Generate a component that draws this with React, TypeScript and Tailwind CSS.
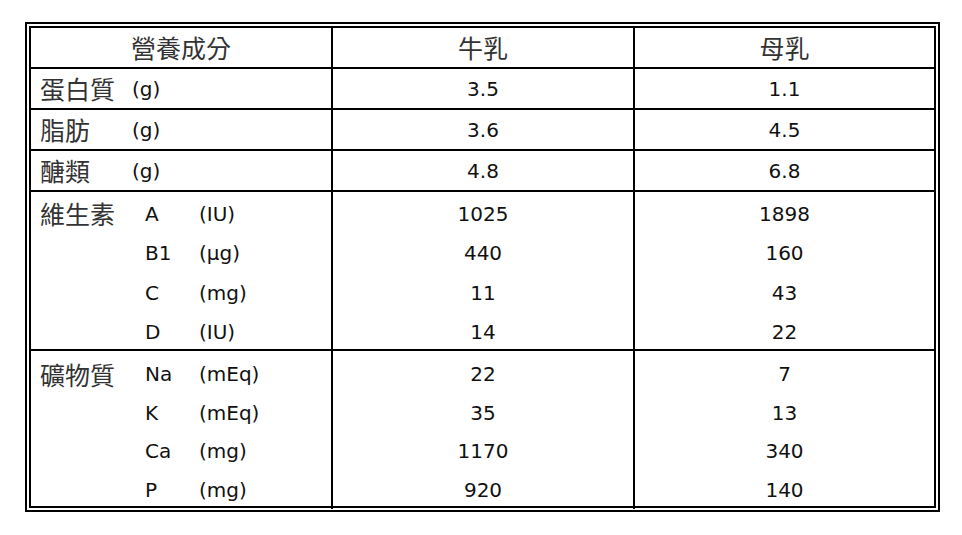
import React from 'react';

type Line = { letter: string; unit: string; cow: string; human: string };

const simpleRows = [
  { label: '蛋白質', cow: '3.5', human: '1.1' },
  { label: '脂肪', cow: '3.6', human: '4.5' },
  { label: '醣類', cow: '4.8', human: '6.8' },
];

const vitamins: Line[] = [
  { letter: 'A', unit: '(IU)', cow: '1025', human: '1898' },
  { letter: 'B1', unit: '(μg)', cow: '440', human: '160' },
  { letter: 'C', unit: '(mg)', cow: '11', human: '43' },
  { letter: 'D', unit: '(IU)', cow: '14', human: '22' },
];

const minerals: Line[] = [
  { letter: 'Na', unit: '(mEq)', cow: '22', human: '7' },
  { letter: 'K', unit: '(mEq)', cow: '35', human: '13' },
  { letter: 'Ca', unit: '(mg)', cow: '1170', human: '340' },
  { letter: 'P', unit: '(mg)', cow: '920', human: '140' },
];

const cjk = "text-[25px] leading-none text-[#333] font-['Noto_Sans_CJK_TC',sans-serif]";
const latin = "text-[20px] leading-none text-[#111] font-['DejaVu_Sans',sans-serif]";

const GroupRow: React.FC<{ label: string; lines: Line[]; lineH: string; pad: string; rowH: string; last?: boolean }> = ({
  label,
  lines,
  lineH,
  pad,
  rowH,
  last,
}) => (
  <div className={`grid grid-cols-[302px_302px_299px] ${rowH} ${last ? '' : 'border-b-2 border-black'}`}>
    <div className={`border-r-2 border-black flex flex-col pl-[9px] ${pad}`}>
      {lines.map((l, i) => (
        <div key={l.letter} className={`flex items-center ${lineH}`}>
          <span className={`w-[105px] ${cjk}`}>{i === 0 ? label : ''}</span>
          <span className={`w-[54px] ${latin}`}>{l.letter}</span>
          <span className={latin}>{l.unit}</span>
        </div>
      ))}
    </div>
    <div className={`border-r-2 border-black flex flex-col ${pad}`}>
      {lines.map((l) => (
        <div key={l.letter} className={`flex items-center justify-center ${lineH} ${latin}`}>
          {l.cow}
        </div>
      ))}
    </div>
    <div className={`flex flex-col ${pad}`}>
      {lines.map((l) => (
        <div key={l.letter} className={`flex items-center justify-center ${lineH} ${latin}`}>
          {l.human}
        </div>
      ))}
    </div>
  </div>
);

const App: React.FC = () => {
  return (
    <div className="min-h-screen bg-white pt-[22px] pl-[25px]">
      {/* double outer frame */}
      <div className="w-[915px] border-2 border-black p-[2px]">
        <div className="border-2 border-black">
          {/* Header */}
          <div className="grid grid-cols-[302px_302px_299px] h-[41px] border-b-2 border-black">
            <div className={`border-r-2 border-black flex items-center justify-center ${cjk}`}>營養成分</div>
            <div className={`border-r-2 border-black flex items-center justify-center ${cjk}`}>牛乳</div>
            <div className={`flex items-center justify-center ${cjk}`}>母乳</div>
          </div>

          {simpleRows.map((r) => (
            <div key={r.label} className="grid grid-cols-[302px_302px_299px] h-[41px] border-b-2 border-black">
              <div className="border-r-2 border-black flex items-center pl-[9px]">
                <span className={`w-[92px] ${cjk}`}>{r.label}</span>
                <span className={latin}>(g)</span>
              </div>
              <div className={`border-r-2 border-black flex items-center justify-center ${latin}`}>{r.cow}</div>
              <div className={`flex items-center justify-center ${latin}`}>{r.human}</div>
            </div>
          ))}

          <GroupRow label="維生素" lines={vitamins} lineH="h-[39.5px]" pad="pt-[2px]" rowH="h-[159px]" />
          <GroupRow label="礦物質" lines={minerals} lineH="h-[38.5px]" pad="pt-[4px]" rowH="h-[155px]" last />
        </div>
      </div>
    </div>
  );
};

export default App;
